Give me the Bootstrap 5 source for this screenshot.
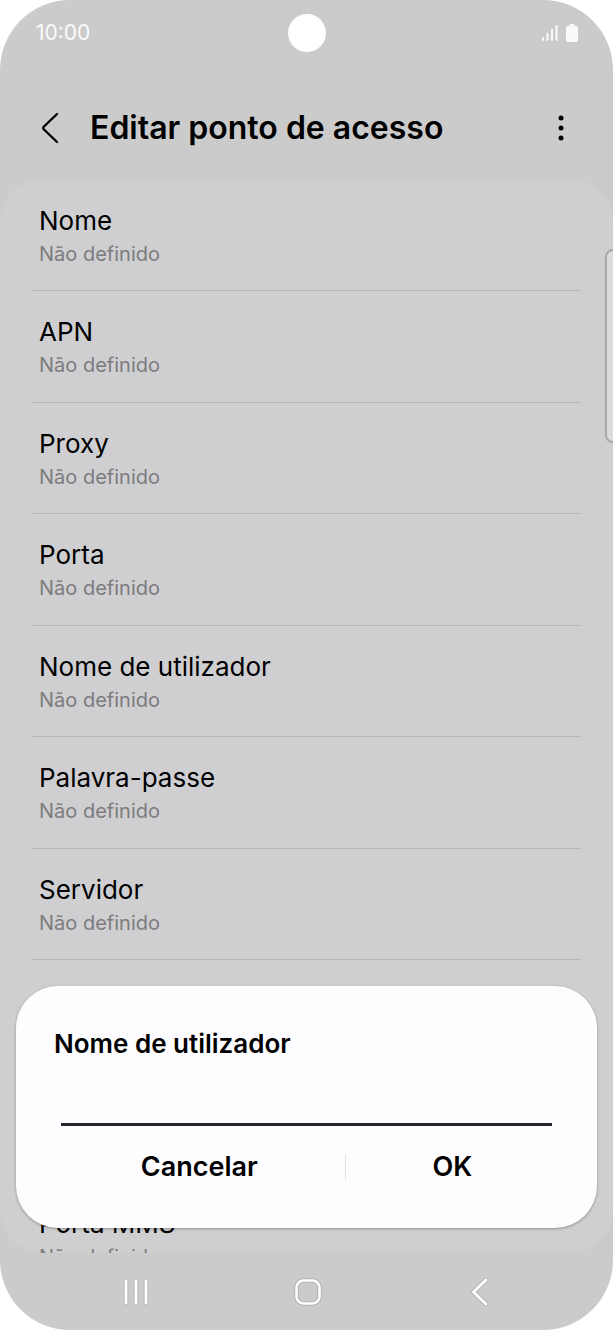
<!DOCTYPE html>
<html lang="pt">
<head>
<meta charset="utf-8">
<meta name="viewport" content="width=device-width, initial-scale=1">
<title>Editar ponto de acesso</title>
<link rel="stylesheet" href="https://cdn.jsdelivr.net/npm/bootstrap@5.3.0/dist/css/bootstrap.min.css">
<style>
  body { font-family: Inter, Roboto, sans-serif; background: #fff; color: #000; }
  svg { display: block; }
  .phone { height: 100vh; min-height: 640px; background: #cbcbcb; border-radius: 70px; }
  .status-bar { height: 66px; padding: 0 35px 0 36px; color: #fafafa; }
  .clock { font-size: 21px; line-height: 30px; }
  .camera { width: 38px; height: 38px; background: #fff; }
  .app-bar { height: 113px; padding: 11px 36px 0 34px; }
  .app-bar h1 { font-size: 32px; line-height: 40px; font-weight: 600; margin-left: 24px; }
  .icon-btn { border: 0; padding: 0; background: none; color: #000; width: 32px; height: 40px; display: flex; align-items: center; justify-content: center; }
  .settings { background: #cfcfd1; border-radius: 42px; padding: 1px 32px 0; min-height: 0; }
  .setting { flex: none; height: 111px; padding: 24px 7px 0; text-decoration: none; color: #000; border-bottom: 1px solid #b6b6b8; }
  .setting:nth-child(even) { height: 112px; }
  .setting-name { font-size: 26px; line-height: 34px; }
  .setting-value { font-size: 20px; line-height: 32px; color: #7c7c7e; }
  .edge-panel { right: -8px; top: 249px; width: 16px; height: 194px; background: #dcdcde; border: 2px solid #a9a9ab; border-radius: 8px; }
  .nav-keys { height: 77px; padding: 0 63px 0 66px; }
  .nav-keys .icon-btn { width: 140px; height: 60px; }
  .dialog { left: 16px; right: 16px; bottom: 102px; background: #fdfdff; border-radius: 42px; padding: 40px 38px 42px; box-shadow: 0 1px 3px rgba(0,0,0,.3); }
  .dialog label { font-size: 26px; line-height: 36px; font-weight: 600; }
  .dialog input { border: 0; border-bottom: 3px solid #262428; border-radius: 0; background: none; height: 50px; margin: 14px 7px 0; font-size: 26px; outline: 0; }
  .dialog-btn { flex: 1 1 auto; border: 0; background: none; padding: 0; font-size: 27px; line-height: 38px; font-weight: 600; color: #000; }
  .dialog-rule { width: 1px; height: 26px; background: #e2e2e4; }
  .actions { padding-top: 22px; }
</style>
</head>
<body>
<div class="phone position-relative overflow-hidden d-flex flex-column">
  <div class="status-bar flex-shrink-0 d-flex align-items-center">
    <div class="col clock">10:00</div>
    <div class="camera rounded-circle"></div>
    <div class="col d-flex justify-content-end align-items-center gap-2">
      <svg width="16" height="18" viewBox="0 0 16 18" fill="none" stroke="currentColor" stroke-width="2" stroke-linecap="round"><path d="M1 14v2M5.500 10v6M10 5.500v10.500M14.500 2v14"/></svg>
      <svg width="12" height="18" viewBox="0 0 12 18" fill="currentColor"><path d="M3.500 2V1q0-1 1-1h3q1 0 1 1v1H10q2 0 2 2v12q0 2-2 2H2q-2 0-2-2V4q0-2 2-2z"/></svg>
    </div>
  </div>
  <header class="app-bar flex-shrink-0 d-flex align-items-center">
    <button type="button" class="icon-btn" aria-label="Voltar">
      <svg width="18" height="32" viewBox="0 0 18 32" fill="none" stroke="currentColor" stroke-width="2.400" stroke-linecap="round" stroke-linejoin="round"><path d="M16 2 2.500 15Q1.800 16 2.500 17L16 30"/></svg>
    </button>
    <h1 class="mb-0 flex-grow-1">Editar ponto de acesso</h1>
    <button type="button" class="icon-btn" aria-label="Mais opções">
      <svg width="6" height="28" viewBox="0 0 6 28" fill="currentColor"><circle cx="3" cy="4" r="2.500"/><circle cx="3" cy="14" r="2.500"/><circle cx="3" cy="24" r="2.500"/></svg>
    </button>
  </header>
  <main class="settings flex-grow-1 overflow-hidden d-flex flex-column">
    <a href="#" class="setting d-flex flex-column"><span class="setting-name">Nome</span><span class="setting-value">Não definido</span></a>
    <a href="#" class="setting d-flex flex-column"><span class="setting-name">APN</span><span class="setting-value">Não definido</span></a>
    <a href="#" class="setting d-flex flex-column"><span class="setting-name">Proxy</span><span class="setting-value">Não definido</span></a>
    <a href="#" class="setting d-flex flex-column"><span class="setting-name">Porta</span><span class="setting-value">Não definido</span></a>
    <a href="#" class="setting d-flex flex-column"><span class="setting-name">Nome de utilizador</span><span class="setting-value">Não definido</span></a>
    <a href="#" class="setting d-flex flex-column"><span class="setting-name">Palavra-passe</span><span class="setting-value">Não definido</span></a>
    <a href="#" class="setting d-flex flex-column"><span class="setting-name">Servidor</span><span class="setting-value">Não definido</span></a>
    <div class="setting"></div>
    <div class="setting"></div>
    <a href="#" class="setting d-flex flex-column"><span class="setting-name">Porta MMS</span><span class="setting-value">Não definido</span></a>
  </main>
  <nav class="nav-keys flex-shrink-0 d-flex align-items-center justify-content-between">
    <button type="button" class="icon-btn" aria-label="Recentes">
      <svg width="28" height="30" viewBox="0 0 28 30" fill="none" stroke-linecap="round"><path stroke="#b4b4b4" stroke-width="4.600" d="M4 4v22M14 4v22M24 4v22"/><path stroke="#fff" stroke-width="2.800" d="M4 4v22M14 4v22M24 4v22"/></svg>
    </button>
    <button type="button" class="icon-btn" aria-label="Início">
      <svg width="30" height="30" viewBox="0 0 30 30" fill="none"><rect x="3.500" y="3.500" width="23" height="23" rx="7" stroke="#b4b4b4" stroke-width="4.600"/><rect x="3.500" y="3.500" width="23" height="23" rx="7" stroke="#fff" stroke-width="2.600"/></svg>
    </button>
    <button type="button" class="icon-btn" aria-label="Voltar">
      <svg width="20" height="30" viewBox="0 0 20 30" fill="none" stroke-linecap="round"><path stroke="#b4b4b4" stroke-width="4.600" d="M16 3 3.500 15 16 27"/><path stroke="#fff" stroke-width="2.800" d="M16 3 3.500 15 16 27"/></svg>
    </button>
  </nav>
  <div class="edge-panel position-absolute"></div>
  <form class="dialog position-absolute d-flex flex-column" role="dialog" aria-labelledby="field-label">
    <label id="field-label" for="username">Nome de utilizador</label>
    <input id="username" type="text">
    <div class="actions d-flex align-items-center">
      <button type="button" class="dialog-btn">Cancelar</button>
      <div class="dialog-rule"></div>
      <button type="button" class="dialog-btn">OK</button>
    </div>
  </form>
</div>
<script src="https://cdn.jsdelivr.net/npm/bootstrap@5.3.0/dist/js/bootstrap.bundle.min.js"></script>
</body>
</html>
